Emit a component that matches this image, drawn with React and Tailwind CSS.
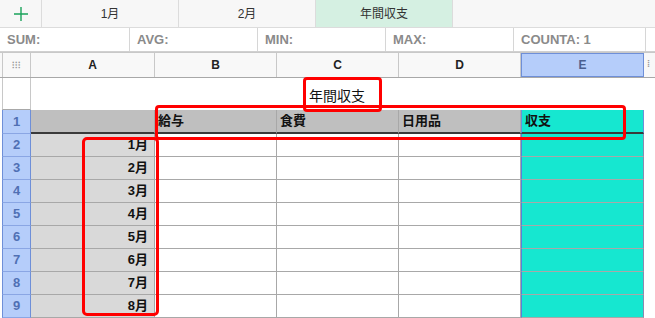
import React from 'react';

const font = { fontFamily: '"Liberation Sans", "Noto Sans CJK JP", sans-serif' };

const cols = [
  { key: 'A', w: 'w-[124px]' },
  { key: 'B', w: 'w-[122px]' },
  { key: 'C', w: 'w-[122px]' },
  { key: 'D', w: 'w-[122px]' },
  { key: 'E', w: 'w-[123px]' },
];

const months = ['1月', '2月', '3月', '4月', '5月', '6月', '7月', '8月'];

const TabBar = () => (
  <div className="flex h-[28px] bg-[#f7f7f7] border-b border-[#dcdcdc]">
    <div className="w-[42px] flex items-center justify-center border-r border-[#dcdcdc]">
      <svg width="14" height="14" viewBox="0 0 14 14">
        <path d="M7 0v14M0 7h14" stroke="#1aa35b" strokeWidth="1.4" />
      </svg>
    </div>
    {['1月', '2月', '年間収支'].map((t, i) => (
      <div
        key={t}
        className={`w-[137px] flex items-center justify-center text-[12px] text-[#333] border-r border-[#dcdcdc] ${i === 2 ? 'bg-[#d5f0e2]' : ''}`}
      >
        {t}
      </div>
    ))}
  </div>
);

const StatusBar = () => (
  <div className="flex h-[24px] bg-white border-b border-[#d0d0d0] text-[13px] font-bold text-[#8a8a8a]">
    {[
      ['SUM:', 'w-[130px]'],
      ['AVG:', 'w-[128px]'],
      ['MIN:', 'w-[128px]'],
      ['MAX:', 'w-[128px]'],
      ['COUNTA: 1', 'w-[132px]'],
    ].map(([t, w]) => (
      <div key={t} className={`${w} flex items-center pl-[7px] border-r border-[#d6d6d6]`}>
        {t}
      </div>
    ))}
  </div>
);

const ColHeader = () => (
  <div className="flex h-[26px] border-t border-[#c8c8c8] border-b border-b-[#a8a8a8] bg-[#f8f8f8] text-[12px] font-bold text-[#222]">
    <div className="w-[29px] ml-[2px] border-l border-r border-[#c8c8c8] flex items-center justify-center">
      <span className="text-[#999] text-[9px] leading-[4px] tracking-[1px]">⁝⁝⁝</span>
    </div>
    {cols.map((c) => (
      <div
        key={c.key}
        className={`${c.w} flex items-center justify-center border-r ${c.key === 'E' ? 'bg-[#b5cdfa] border border-[#6e8fd8] text-[#4a5f8f]' : 'border-[#c8c8c8]'}`}
      >
        {c.key}
      </div>
    ))}
    <div className="flex-1 flex items-center pl-[3px] text-[#999] text-[9px]">⁞</div>
  </div>
);

const RowHead = ({ n, title }) => (
  <div
    className={`w-[29px] ml-[2px] shrink-0 flex items-center justify-center text-[13px] font-bold border-l border-r ${
      title ? 'bg-white border-[#c8c8c8] border-b border-b-[#a8a8a8]' : 'bg-[#b5cdfa] text-[#5070b4] border-[#6e8fd8] border-b border-b-[#8aa6e4]'
    }`}
  >
    {n}
  </div>
);

export default function App() {
  return (
    <div className="relative w-[655px] h-[318px] overflow-hidden bg-white" style={font}>
      <TabBar />
      <StatusBar />
      <ColHeader />

      {/* title row */}
      <div className="flex h-[32px]">
        <RowHead n="" title />
        <div className="flex-1 flex items-center pl-[278px] pt-[4px] text-[14px] text-[#111]">
          年間収支
        </div>
      </div>

      {/* row 1 headers */}
      <div className="flex h-[24px]">
        <RowHead n="1" />
        <div className="w-[124px] bg-[#bfbfbf] border-b-2 border-[#3a3a3a] border-r border-r-[#a8a8a8]" />
        {['給与', '食費', '日用品'].map((t) => (
          <div
            key={t}
            className="w-[122px] bg-[#bfbfbf] border-b-2 border-[#3a3a3a] border-r border-r-[#a8a8a8] flex items-center pl-[3px] text-[13px] font-bold text-[#111]"
          >
            {t}
          </div>
        ))}
        <div className="w-[123px] bg-[#16e7d0] border-b-2 border-b-[#3a3a3a] border-l border-r border-[#6e8fd8] flex items-center pl-[3px] text-[13px] font-bold text-[#111]">
          収支
        </div>
      </div>

      {months.map((m, i) => (
        <div key={m} className="flex h-[23px]">
          <RowHead n={i + 2} />
          <div className="w-[124px] bg-[#d9d9d9] border-b border-r border-[#a8a8a8] flex items-center justify-end pr-[6px] text-[13px] font-bold text-[#111]">
            {m}
          </div>
          {[0, 1, 2].map((k) => (
            <div key={k} className="w-[122px] border-b border-r border-[#a8a8a8]" />
          ))}
          <div className="w-[123px] bg-[#16e7d0] border-b border-b-[#a8a8a8] border-l border-r border-l-[#5b7fd6] border-r-[#8a8ab0]" />
        </div>
      ))}

      {/* annotations */}
      <div className="absolute left-[303px] top-[77px] w-[79px] h-[35px] border-[3px] border-[#ff0000] rounded-[4px]" />
      <div className="absolute left-[155px] top-[105px] w-[471px] h-[35px] border-[3px] border-[#ff0000] rounded-[4px]" />
      <div className="absolute left-[82px] top-[137px] w-[77px] h-[179px] border-[3px] border-[#ff0000] rounded-[5px]" />
    </div>
  );
}
